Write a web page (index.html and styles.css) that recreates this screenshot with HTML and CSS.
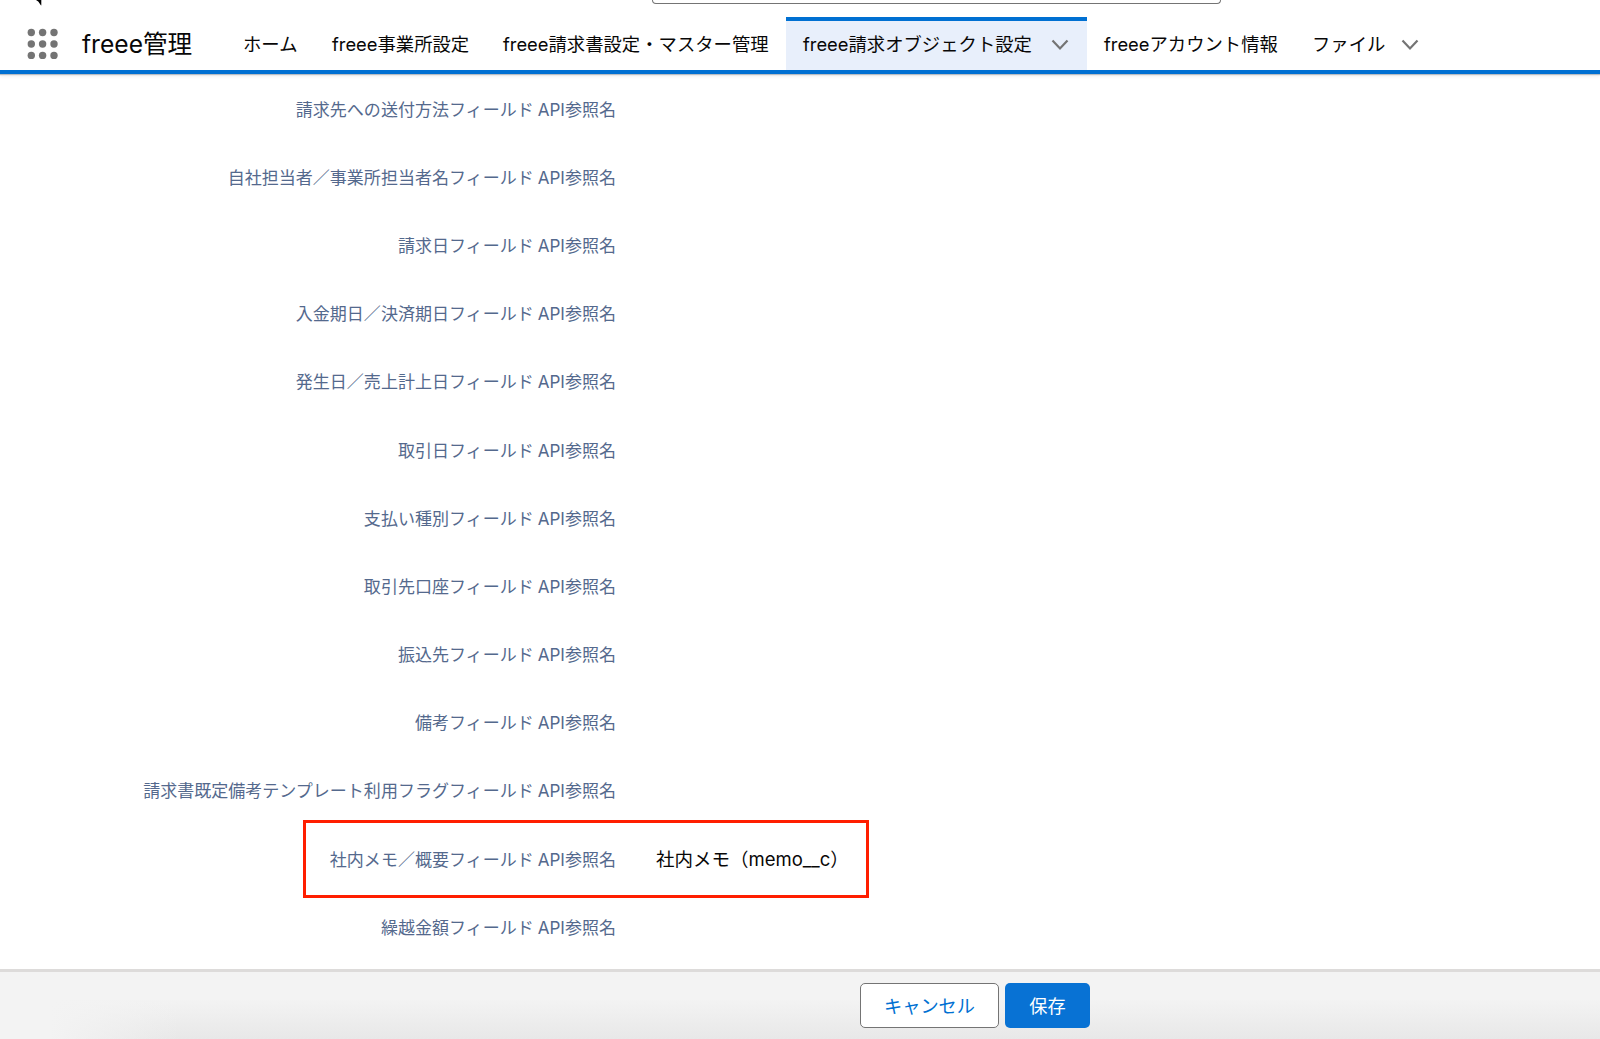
FILE: index.html
```
<!DOCTYPE html>
<html lang="ja">
<head>
    <meta charset="UTF-8">
    <meta name="viewport" content="width=device-width, initial-scale=1.0">
    <title>freee請求オブジェクト設定 - freee管理</title>
    <link rel="stylesheet" href="styles.css">
</head>
<body>
    <header>
        <div class="topbar">
            <svg class="logo" width="8" height="6" viewBox="0 0 8 6"><path d="M0 0H5.3V5.5Q4.600 5.200 4 4Q2.500 1.200 0 0Z" fill="#000"/></svg>
            <div class="search"></div>
        </div>
        <nav>
            <svg class="launcher" width="32" height="32" viewBox="0 0 32 32" fill="#747474">
                <circle cx="4.300" cy="4.500" r="3.700"/><circle cx="15.600" cy="4.500" r="3.700"/><circle cx="27" cy="4.500" r="3.700"/>
                <circle cx="4.300" cy="16" r="3.700"/><circle cx="15.600" cy="16" r="3.700"/><circle cx="27" cy="16" r="3.700"/>
                <circle cx="4.300" cy="27.400" r="3.700"/><circle cx="15.600" cy="27.400" r="3.700"/><circle cx="27" cy="27.400" r="3.700"/>
            </svg>
            <div class="app-name">freee管理</div>
            <a class="tab home">ホーム</a>
            <a class="tab company">freee事業所設定</a>
            <a class="tab master">freee請求書設定・マスター管理</a>
            <a class="tab object active">freee請求オブジェクト設定
                <svg class="chevron" width="18" height="12" viewBox="0 0 18 12"><path d="M1.500 1.500L9 9.500L16.500 1.500"/></svg>
            </a>
            <a class="tab account">freeeアカウント情報</a>
            <a class="tab file">ファイル
                <svg class="chevron" width="18" height="12" viewBox="0 0 18 12"><path d="M1.500 1.500L9 9.500L16.500 1.500"/></svg>
            </a>
        </nav>
    </header>
    <main>
        <div class="row"><div class="label">請求先への送付方法フィールド API参照名</div></div>
        <div class="row"><div class="label">自社担当者／事業所担当者名フィールド API参照名</div></div>
        <div class="row"><div class="label">請求日フィールド API参照名</div></div>
        <div class="row"><div class="label">入金期日／決済期日フィールド API参照名</div></div>
        <div class="row"><div class="label">発生日／売上計上日フィールド API参照名</div></div>
        <div class="row"><div class="label">取引日フィールド API参照名</div></div>
        <div class="row"><div class="label">支払い種別フィールド API参照名</div></div>
        <div class="row"><div class="label">取引先口座フィールド API参照名</div></div>
        <div class="row"><div class="label">振込先フィールド API参照名</div></div>
        <div class="row"><div class="label">備考フィールド API参照名</div></div>
        <div class="row"><div class="label">請求書既定備考テンプレート利用フラグフィールド API参照名</div></div>
        <div class="row">
            <div class="label">社内メモ／概要フィールド API参照名</div>
            <div class="value">社内メモ（memo__c）</div>
            <div class="highlight"></div>
        </div>
        <div class="row"><div class="label">繰越金額フィールド API参照名</div></div>
    </main>
    <footer>
        <button class="cancel">キャンセル</button>
        <button class="save">保存</button>
    </footer>
</body>
</html>
```
FILE: styles.css
```
* {
    box-sizing: border-box;
}
body {
    font-family: Inter, "Noto Sans CJK JP", sans-serif;
    font-weight: 400;
    margin: 0;
    height: 1039px;
    display: flex;
    flex-direction: column;
    overflow: hidden;
    background-color: #fff;
    color: #080707;
}
header {
    height: 74px;
    flex: none;
    border-bottom: 4px solid #0070d2;
    box-shadow: 0 1px 1px #b9bdc2, 0 2px 4px rgba(0, 0, 0, 0.08);
}
.topbar {
    height: 17px;
    display: flex;
    align-items: flex-start;
}
.logo {
    margin-left: 36px;
}
.search {
    width: 569px;
    height: 4px;
    margin-left: 608px;
    border: 1px solid #747474;
    border-top: none;
    border-radius: 0 0 5px 5px;
}
nav {
    height: 53px;
    display: flex;
    align-items: stretch;
}
.launcher {
    flex: none;
    margin: 11px 0 0 27px;
}
.app-name {
    width: 144px;
    margin-left: 23px;
    font-size: 24.6px;
    line-height: 54px;
    white-space: nowrap;
}
.tab {
    display: flex;
    flex: none;
    align-items: center;
    justify-content: space-between;
    padding: 0 18px 6px 17px;
    font-size: 18.35px;
    white-space: nowrap;
    border-top: 4px solid transparent;
}
.home {
    width: 89px;
}
.company {
    width: 171px;
}
.master {
    width: 300px;
}
.object {
    width: 301px;
}
.account {
    width: 208px;
}
.file {
    width: 142px;
}
.active {
    background-color: #e8effb;
    border-top-color: #0070d2;
}
.chevron {
    fill: none;
    stroke: #747474;
    stroke-width: 2.2;
    margin-top: 4px;
}
main {
    flex: 1;
}
.row {
    position: relative;
    display: flex;
    align-items: center;
    height: 68.2px;
}
.label {
    width: 616px;
    text-align: right;
    font-size: 17.03px;
    word-spacing: -0.7px;
    color: #54698d;
    white-space: nowrap;
}
.value {
    margin-left: 40px;
    font-size: 18.5px;
    white-space: nowrap;
}
.highlight {
    position: absolute;
    left: 303px;
    top: -4px;
    width: 566px;
    height: 78px;
    border: 3px solid #ff1e00;
}
footer {
    height: 70px;
    flex: none;
    display: flex;
    gap: 6px;
    padding: 11px 0 0 860px;
    border-top: 3px solid #dddbda;
    background: linear-gradient(to right, #f3f3f3 50px, rgba(243, 243, 243, 0) 180px), linear-gradient(#f3f3f3 40%, #e8e8e8);
}
button {
    height: 45px;
    padding: 0 0 2px;
    border-radius: 5px;
    font-family: inherit;
    font-size: 18.2px;
}
.cancel {
    width: 139px;
    border: 1px solid #747474;
    background-color: #fff;
    color: #0070d2;
}
.save {
    width: 85px;
    border: none;
    background-color: #0872d4;
    color: #fff;
}
```
